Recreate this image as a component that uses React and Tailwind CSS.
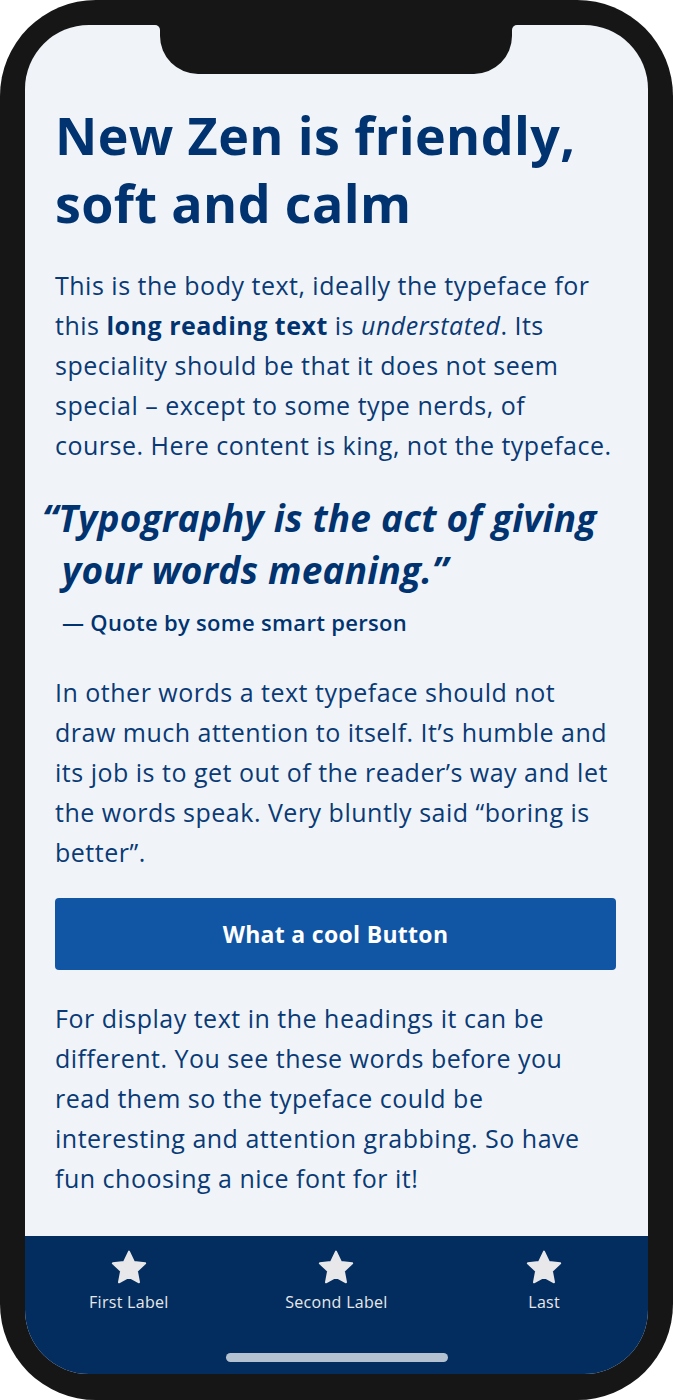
import React from "react";

const navItems = ["First Label", "Second Label", "Last"];

function Star() {
  return (
    <svg width="40" height="40" viewBox="0 0 24 24" className="block">
      <path
        d="M12 2.2l2.95 6.15 6.75.85-4.95 4.65 1.25 6.7L12 17.3l-6 3.25 1.25-6.7L2.3 9.2l6.75-.85z"
        fill="#e8e8ea"
        stroke="#e8e8ea"
        strokeWidth="1.2"
        strokeLinejoin="round"
      />
    </svg>
  );
}

export default function App() {
  return (
    <div className="w-[673px] h-[1400px] bg-white">
      <div className="h-full bg-[#161616] rounded-[96px] p-[25px] pb-[26px]">
        <div
          className="relative h-full rounded-[64px] overflow-hidden bg-[#f0f4f8] flex flex-col text-[#00336f]"
          style={{ fontFamily: "'Open Sans', 'Noto Sans', sans-serif" }}
        >
          {/* notch */}
          <div className="absolute top-0 left-[135px] w-[352px] h-[49px] bg-[#161616] rounded-b-[38px]" />
          <div className="absolute top-0 left-[130px] w-[5px] h-[5px] bg-[#161616]">
            <div className="w-full h-full bg-[#f0f4f8] rounded-tr-[5px]" />
          </div>
          <div className="absolute top-0 left-[487px] w-[5px] h-[5px] bg-[#161616]">
            <div className="w-full h-full bg-[#f0f4f8] rounded-tl-[5px]" />
          </div>

          <main className="pt-[76px] pl-[30px] pr-[32px]">
            <h1 className="text-[52px] leading-[68px] font-bold tracking-[0.4px]">
              New Zen is friendly, soft and calm
            </h1>

            <p className="mt-[28px] text-[25px] leading-[40px] tracking-[0.5px] text-[#0a3a75]">
              This is the body text, ideally the typeface for this{" "}
              <strong className="font-bold text-[#00336f]">long reading text</strong> is{" "}
              <em>understated</em>. Its speciality should be that it does not seem
              special – except to some type nerds, of course. Here content is king,
              not the typeface.
            </p>

            <blockquote className="mt-[27px] pl-[7px]">
              <p className="text-[37px] leading-[52px] font-bold italic tracking-[0.2px] indent-[-20px]">
                “Typography is the act of giving your words meaning.”
              </p>
              <p className="mt-[12px] text-[22px] leading-[28px] font-semibold tracking-[0.3px]">
                — Quote by some smart person
              </p>
            </blockquote>

            <p className="mt-[36px] text-[25px] leading-[40px] tracking-[0.5px] text-[#0a3a75]">
              In other words a text typeface should not draw much attention to itself.
              It’s humble and its job is to get out of the reader’s way and let the
              words speak. Very bluntly said “boring is better”.
            </p>

            <button className="mt-[26px] w-full h-[72px] rounded-[4px] bg-[#1155a5] text-white text-[23px] font-bold tracking-[0.3px]">
              What a cool Button
            </button>

            <p className="mt-[28px] text-[25px] leading-[40px] tracking-[0.5px] text-[#0a3a75]">
              For display text in the headings it can be different. You see these words
              before you read them so the typeface could be interesting and attention
              grabbing. So have fun choosing a nice font for it!
            </p>
          </main>

          <nav className="mt-auto h-[138px] bg-[#032d5e] flex flex-col">
            <div className="grid grid-cols-3 pt-[12px]">
              {navItems.map((label) => (
                <div key={label} className="flex flex-col items-center">
                  <Star />
                  <span className="mt-[4px] text-[16px] leading-[20px] text-[#e8e8ea] font-medium tracking-[0.3px]">
                    {label}
                  </span>
                </div>
              ))}
            </div>
            <div className="mt-auto mb-[12px] mx-auto w-[222px] h-[9px] rounded-full bg-[#b3c1d1]" />
          </nav>
        </div>
      </div>
    </div>
  );
}
